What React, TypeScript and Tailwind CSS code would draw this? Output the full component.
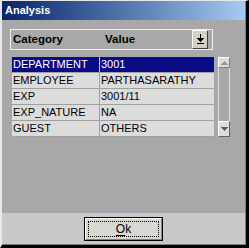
import type React from 'react';

const rows: { category: string; value: string }[] = [
  { category: 'DEPARTMENT', value: '3001' },
  { category: 'EMPLOYEE', value: 'PARTHASARATHY' },
  { category: 'EXP', value: '3001/11' },
  { category: 'EXP_NATURE', value: 'NA' },
  { category: 'GUEST', value: 'OTHERS' },
];

const DropIcon: React.FC = () => (
  <svg aria-hidden="true" width="9" height="11" viewBox="0 0 9 11" shapeRendering="crispEdges">
    <rect x="4" y="0" width="1" height="5" fill="#000" />
    <polygon points="1,4 8,4 4.5,8" fill="#000" />
    <rect x="1" y="9" width="7" height="1" fill="#000" />
  </svg>
);

const Arrow: React.FC<{ up?: boolean }> = ({ up }) => (
  <svg aria-hidden="true" width="7" height="4" viewBox="0 0 7 4" shapeRendering="crispEdges">
    <polygon points={up ? '3.5,0 7,4 0,4' : '0,0 7,0 3.5,4'} fill={up ? '#9a9a9a' : '#606060'} />
  </svg>
);

export default function App() {
  return (
    <div
      className="flex h-[248px] w-[249px] flex-col border-l-2 border-t border-r-[3px] border-b-[3px] border-l-[#e8e8e8] border-t-[#e8e8e8] border-r-black border-b-black"
      style={{ fontFamily: '"Liberation Sans", Arial, sans-serif' }}
    >
      <div className="flex flex-1 flex-col border-r border-b border-[#808080]">
        {/* title bar */}
        <div className="flex h-[19px] items-center bg-gradient-to-r from-[#0a246a] to-[#a6caf0] pl-[3px]">
          <span className="text-[11px] font-bold text-white">Analysis</span>
        </div>

        {/* body */}
        <div className="flex h-[193px] flex-col bg-[#a8a8a8] pl-[8px] pt-[9px]">
          {/* header */}
          <div className="flex h-[21px] w-[203px] items-center border border-[#f0f0f0]">
            <span className="w-[94px] pl-[2px] text-[11.5px] font-bold text-black">Category</span>
            <span className="text-[11.5px] font-bold text-black">Value</span>
            <button
              type="button"
              className="mr-[4px] ml-auto flex h-[19px] w-[16px] items-center justify-center self-start border border-t-white border-l-white border-r-[#404040] border-b-[#404040] bg-[#d4d0c8]"
            >
              <DropIcon />
            </button>
          </div>

          {/* grid + scrollbar */}
          <div className="mt-[7px] ml-[2px] flex gap-[4px]">
            <div className="flex w-[202px] flex-col">
              {rows.map((row, i) => {
                const selected = i === 0;
                return (
                  <div
                    key={row.category}
                    className={`flex h-[16px] border-b border-[#a0a0a0] text-[11px] leading-[15px] ${
                      selected ? 'bg-[#0a0a84] text-white' : 'bg-[#dcdcdc] text-black'
                    }`}
                  >
                    <div className="w-[87px] pl-[1px]">{row.category}</div>
                    <div
                      className={`flex-1 border-l pl-[1px] ${
                        selected ? 'border-[#c8c8c8]' : 'border-[#a0a0a0]'
                      }`}
                    >
                      {row.value}
                    </div>
                  </div>
                );
              })}
            </div>

            <div className="flex h-[80px] w-[12px] flex-col">
              <div className="flex h-[11px] items-center justify-center border border-t-white border-l-white border-r-[#808080] border-b-[#808080] bg-[#dcdcdc]">
                <Arrow up />
              </div>
              <div className="flex-1 border-x border-[#e0e0e0]" />
              <div className="flex h-[16px] items-center justify-center border border-t-white border-l-white border-r-[#606060] border-b-[#606060] bg-[#dcdcdc]">
                <Arrow />
              </div>
            </div>
          </div>
        </div>

        {/* footer */}
        <div className="flex flex-1 items-start justify-center bg-[#c8c8c8] pt-[4px]">
          <button
            type="button"
            className="h-[24px] w-[79px] border border-black bg-[#d8d8d0] p-0"
          >
            <div className="flex h-full w-full border border-t-white border-l-white border-r-[#808080] border-b-[#808080] p-[2px]">
              <div className="flex flex-1 items-center justify-center border border-dotted border-black text-[12px] leading-none text-black">
                <span className="underline underline-offset-2">O</span>k
              </div>
            </div>
          </button>
        </div>
      </div>
    </div>
  );
}
